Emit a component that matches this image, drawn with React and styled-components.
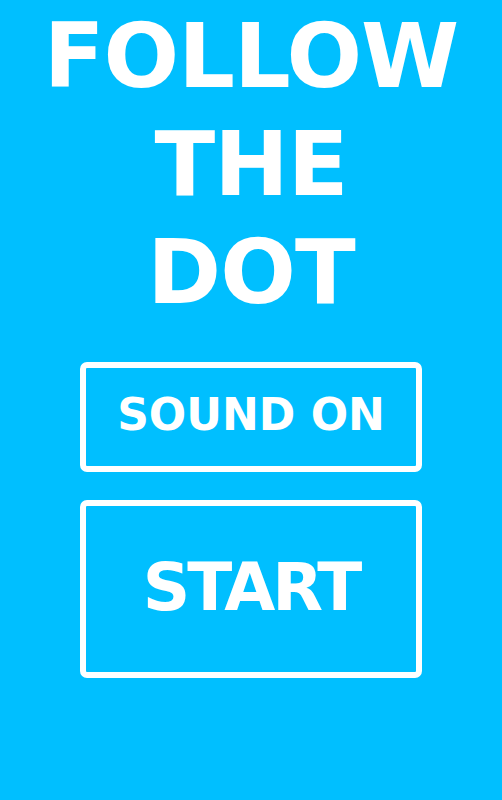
import React from "react";
import styled, { createGlobalStyle } from "styled-components";

const Global = createGlobalStyle`
  html, body {
    margin: 0;
    padding: 0;
    background: #00bfff;
  }
  body {
    font-family: "DejaVu Sans", Verdana, sans-serif;
  }
`;

const Screen = styled.main`
  width: 502px;
  height: 800px;
  background: #00bfff;
  display: flex;
  flex-direction: column;
  align-items: center;
  overflow: hidden;
`;

const Title = styled.h1`
  margin: 2px 0 0;
  font-family: "DejaVu Sans", Verdana, sans-serif;
  font-weight: bold;
  font-size: 89px;
  line-height: 108px;
  letter-spacing: -1px;
  color: #fff;
  text-align: center;
`;

const Menu = styled.nav`
  margin-top: 36px;
  display: flex;
  flex-direction: column;
  gap: 28px;
`;

const MenuButton = styled.button`
  box-sizing: border-box;
  width: 342px;
  height: ${(p) => p.$height}px;
  display: flex;
  align-items: center;
  justify-content: center;
  padding: 0 0 ${(p) => p.$lift}px;
  background: transparent;
  border: 6px solid #fff;
  border-radius: 7px;
  color: #fff;
  font-family: "DejaVu Sans", Verdana, sans-serif;
  font-weight: bold;
  font-size: ${(p) => p.$size}px;
  letter-spacing: ${(p) => p.$track}px;
  cursor: pointer;
`;

export default function App() {
  return (
    <>
      <Global />
      <Screen>
        <Title>
          FOLLOW
          <br />
          THE
          <br />
          DOT
        </Title>
        <Menu>
          <MenuButton $height={110} $size={44} $track={0} $lift={6}>
            SOUND ON
          </MenuButton>
          <MenuButton $height={178} $size={66} $track={-3} $lift={4}>
            START
          </MenuButton>
        </Menu>
      </Screen>
    </>
  );
}
